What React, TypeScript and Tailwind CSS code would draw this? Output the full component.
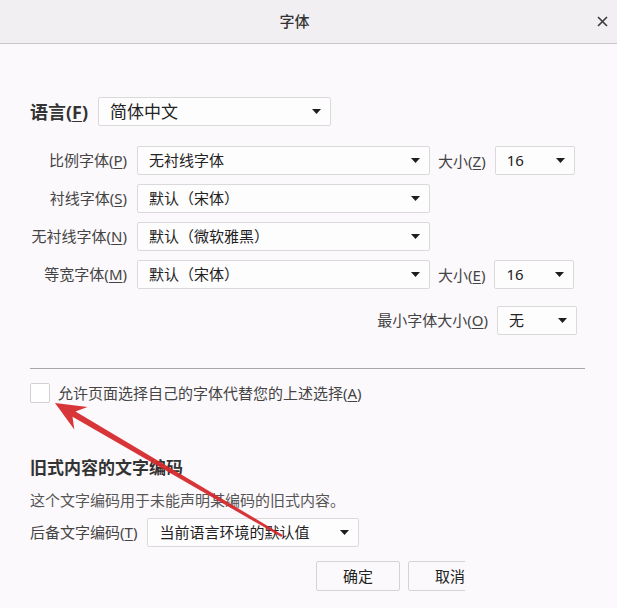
import React from 'react'

const font = "font-['Noto_Sans','Noto_Sans_CJK_SC',sans-serif]"

function Caret() {
    return (
        <svg width="9" height="5" viewBox="0 0 9 5" className="shrink-0">
            <path d="M0 0 H9 L4.5 5 Z" fill="#1e1e1e" />
        </svg>
    )
}

function Select({ value, w, big }: { value: string; w: string; big?: boolean }) {
    return (
        <div className={`${w} h-[29px] shrink-0 flex items-center justify-between pl-[11px] pr-[9px] bg-[#fefdfe] border border-[#dcd9dc] rounded-[2px]`}>
            <span className={`${big ? 'text-[17px]' : 'text-[15px]'} leading-none text-[#222]`}>{value}</span>
            <Caret />
        </div>
    )
}

function Label({ text, k }: { text: string; k: string }) {
    return (
        <span className="text-[15px] leading-none text-[#444] whitespace-nowrap">
            {text}(<span className="underline underline-offset-2">{k}</span>)
        </span>
    )
}

function FontRow({ text, k, value, size }: { text: string; k: string; value: string; size?: { k: string; v: string } }) {
    return (
        <div className="flex items-center h-[29px]">
            <div className="w-[97px] flex justify-end"><Label text={text} k={k} /></div>
            <div className="ml-[10px]"><Select value={value} w="w-[293px]" /></div>
            {size && (
                <>
                    <div className="ml-[8px]"><Label text="大小" k={size.k} /></div>
                    <div className="ml-[9px]"><Select value={size.v} w="w-[80px]" /></div>
                </>
            )}
        </div>
    )
}

export default function App(): React.ReactElement {
    return (
        <div className={`relative w-[617px] h-[608px] overflow-hidden bg-[#fcf9fc] ${font}`}>
            {/* title bar */}
            <div className="h-[44px] flex items-center bg-[#f2eff2] border-b border-[#c9c6c9]">
                <div className="flex-1 text-center text-[15px] font-medium text-[#333] pl-[1px]">字体</div>
                <div className="w-[28px] mr-[1px] flex justify-center text-[#444]">
                    <svg width="11" height="11" viewBox="0 0 11 11"><path d="M1 1 L10 10 M10 1 L1 10" stroke="#3a3a3a" strokeWidth="1.6" /></svg>
                </div>
            </div>

            <div className="pl-[30px] pr-[32px]">
                {/* language */}
                <div className="mt-[53px] flex items-center h-[29px]">
                    <span className="text-[18px] font-bold leading-none text-[#333]">语言(<span className="underline underline-offset-2">F</span>)</span>
                    <div className="ml-[10px]"><Select value="简体中文" w="w-[233px]" big /></div>
                </div>

                <div className="mt-[20px] flex flex-col gap-[9px]">
                    <FontRow text="比例字体" k="P" value="无衬线字体" size={{ k: 'Z', v: '16' }} />
                    <FontRow text="衬线字体" k="S" value="默认（宋体）" />
                    <FontRow text="无衬线字体" k="N" value="默认（微软雅黑）" />
                    <FontRow text="等宽字体" k="M" value="默认（宋体）" size={{ k: 'E', v: '16' }} />
                </div>

                <div className="mt-[17px] w-[547px] flex items-center justify-end h-[29px]">
                    <Label text="最小字体大小" k="O" />
                    <div className="ml-[9px]"><Select value="无" w="w-[80px]" /></div>
                </div>

                <div className="mt-[33px] h-px bg-[#a9a6a9]" />

                {/* allow pages */}
                <div className="mt-[14px] flex items-center h-[20px]">
                    <div className="w-[20px] h-[20px] bg-white border border-[#d3d0d3] rounded-[2px]" />
                    <span className="ml-[8px] text-[15px] leading-none text-[#444]">
                        允许页面选择自己的字体代替您的上述选择(<span className="underline underline-offset-2">A</span>)
                    </span>
                </div>

                {/* legacy encoding */}
                <div className="mt-[53px] text-[17px] font-bold leading-[24px] text-[#333]">旧式内容的文字编码</div>
                <div className="mt-[10px] text-[15px] leading-[20px] text-[#555]">这个文字编码用于未能声明某编码的旧式内容。</div>
                <div className="mt-[8px] flex items-center h-[29px]">
                    <Label text="后备文字编码" k="T" />
                    <div className="ml-[10px]"><Select value="当前语言环境的默认值" w="w-[212px]" /></div>
                </div>

                <div className="mt-[14px] w-[435px] flex justify-end gap-[8px]">
                    <button className="w-[84px] h-[30px] bg-[#fbf9fb] border border-[#d6d3d6] rounded-[2px] text-[15px] text-[#222]">确定</button>
                    <div className="w-[57px] overflow-hidden">
                        <button className="w-[84px] h-[30px] bg-[#fbf9fb] border border-[#d6d3d6] rounded-[2px] text-[15px] text-[#222]">取消</button>
                    </div>
                </div>
            </div>

            {/* red annotation arrow */}
            <svg className="absolute inset-0 pointer-events-none" width="617" height="608" viewBox="0 0 617 608">
                <polygon
                    points="55,403 74.3,429.4 72.5,416.7 281.3,537.1 282.7,534.9 75.5,411.5 87.5,407"
                    fill="#d52a2c"
                    opacity="0.95"
                />
            </svg>
        </div>
    )
}
